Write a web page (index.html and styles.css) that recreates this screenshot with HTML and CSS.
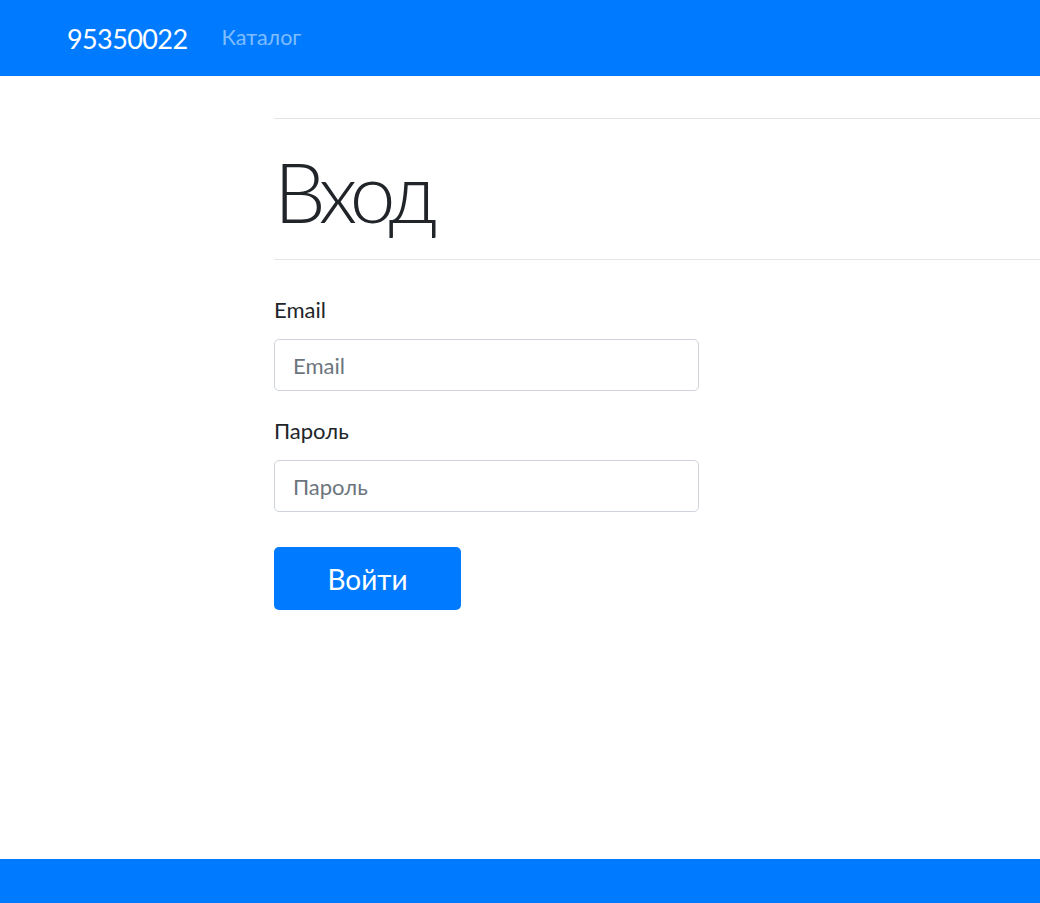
FILE: index.html
```html
<!DOCTYPE html>
<html lang="ru">
<head>
<meta charset="utf-8">
<title>Вход</title>
<link rel="stylesheet" href="styles.css">
</head>
<body>
<div class="page">
  <nav class="navbar">
    <a class="brand" href="#">95350022</a>
    <a class="nav-link" href="#">Каталог</a>
  </nav>
  <main class="main">
    <hr class="rule">
    <h1 class="title">Вход</h1>
    <hr class="rule">
    <form class="form">
      <div class="group">
        <label class="label" for="email">Email</label>
        <input class="control" id="email" type="text" placeholder="Email">
      </div>
      <div class="group">
        <label class="label" for="pass">Пароль</label>
        <input class="control" id="pass" type="password" placeholder="Пароль">
      </div>
      <button class="btn" type="button">Войти</button>
    </form>
  </main>
  <footer class="footer"></footer>
</div>
</body>
</html>
```
FILE: styles.css
```css
html, body {
  margin: 0;
  padding: 0;
}
body {
  font-family: Lato, "Open Sans", sans-serif;
  color: #212529;
  background: #fff;
}
.page {
  display: flex;
  flex-direction: column;
  min-height: 100vh;
}
.navbar {
  background: #007bff;
  height: 76px;
  display: flex;
  align-items: center;
  padding-left: 67px;
  box-sizing: border-box;
}
.brand {
  color: #fff;
  font-size: 27px;
  letter-spacing: -0.6px;
  text-decoration: none;
  margin-right: 34px;
  line-height: 1;
}
.nav-link {
  color: rgba(255,255,255,0.5);
  font-size: 21.5px;
  text-decoration: none;
  line-height: 1;
}
.main {
  flex: 1;
  padding: 42px 0 0 274px;
}
.rule {
  border: 0;
  border-top: 1px solid rgba(0,0,0,0.1);
  margin: 0;
}
.title {
  font-size: 82px;
  font-weight: 300;
  letter-spacing: -5.5px;
  line-height: 101px;
  margin: 22px 0 17px;
}
.form {
  padding-top: 33px;
  width: 425px;
}
.group {
  display: flex;
  flex-direction: column;
  margin-bottom: 23px;
}
.label {
  font-size: 22px;
  line-height: 33px;
  margin-bottom: 13px;
}
.control {
  box-sizing: border-box;
  height: 52px;
  width: 425px;
  border: 1px solid #ced4da;
  border-radius: 5px;
  padding: 0 18px;
  font-family: inherit;
  font-size: 22px;
  color: #495057;
}
.control::placeholder {
  color: #6c757d;
}
.btn {
  margin-top: 12px;
  width: 187px;
  height: 63px;
  background: #007bff;
  color: #fff;
  border: 0;
  border-radius: 5px;
  font-family: inherit;
  font-size: 28px;
  padding: 0;
}
.footer {
  background: #007bff;
  height: 44px;
}
```
